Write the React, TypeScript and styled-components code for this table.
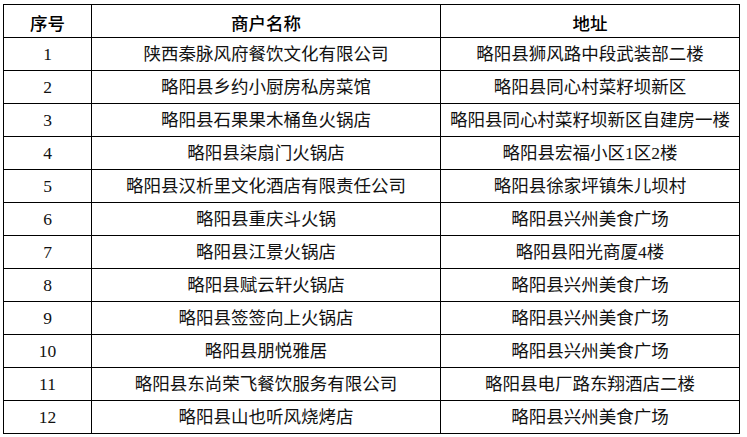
import styled, { createGlobalStyle } from "styled-components";

interface Merchant {
	id: number;
	name: string;
	address: string;
}

const merchants: Merchant[] = [
	{ id: 1, name: "陕西秦脉风府餐饮文化有限公司", address: "略阳县狮风路中段武装部二楼" },
	{ id: 2, name: "略阳县乡约小厨房私房菜馆", address: "略阳县同心村菜籽坝新区" },
	{ id: 3, name: "略阳县石果果木桶鱼火锅店", address: "略阳县同心村菜籽坝新区自建房一楼" },
	{ id: 4, name: "略阳县柒扇门火锅店", address: "略阳县宏福小区1区2楼" },
	{ id: 5, name: "略阳县汉析里文化酒店有限责任公司", address: "略阳县徐家坪镇朱儿坝村" },
	{ id: 6, name: "略阳县重庆斗火锅", address: "略阳县兴州美食广场" },
	{ id: 7, name: "略阳县江景火锅店", address: "略阳县阳光商厦4楼" },
	{ id: 8, name: "略阳县赋云轩火锅店", address: "略阳县兴州美食广场" },
	{ id: 9, name: "略阳县签签向上火锅店", address: "略阳县兴州美食广场" },
	{ id: 10, name: "略阳县朋悦雅居", address: "略阳县兴州美食广场" },
	{ id: 11, name: "略阳县东尚荣飞餐饮服务有限公司", address: "略阳县电厂路东翔酒店二楼" },
	{ id: 12, name: "略阳县山也听风烧烤店", address: "略阳县兴州美食广场" },
];

const GlobalStyle = createGlobalStyle`
	html, body {
		margin: 0;
		padding: 0;
		background-color: #ffffff;
	}
`;

const Page = styled.div`
	width: 747px;
	height: 437px;
	padding: 4px 0 0 3px;
	box-sizing: border-box;
	background-color: #ffffff;
`;

const Table = styled.table`
	border-collapse: collapse;
	table-layout: fixed;
	width: 737px;
	color: #000000;
`;

const Row = styled.tr`
	height: 33px;
`;

const HeadCell = styled.th`
	border: 1px solid #000000;
	padding: 3px 0 0 0;
	text-align: center;
	vertical-align: middle;
	font-family: "Noto Sans CJK SC", sans-serif;
	font-size: 17.5px;
	font-weight: 500;
	line-height: 1;
`;

const Cell = styled.td`
	border: 1px solid #000000;
	padding: 1px 0 0 0;
	text-align: center;
	vertical-align: middle;
	white-space: nowrap;
	font-family: "Liberation Serif", "Noto Sans CJK SC", serif;
	font-size: 17.5px;
	font-weight: 400;
	line-height: 1;
	color: #111111;
`;

export default function App() {
	return (
		<Page>
			<GlobalStyle />
			<Table>
				<colgroup>
					<col style={{ width: 88 }} />
					<col style={{ width: 349 }} />
					<col style={{ width: 299 }} />
				</colgroup>
				<thead>
					<Row>
						<HeadCell>序号</HeadCell>
						<HeadCell>商户名称</HeadCell>
						<HeadCell>地址</HeadCell>
					</Row>
				</thead>
				<tbody>
					{merchants.map((m) => (
						<Row key={m.id}>
							<Cell>{m.id}</Cell>
							<Cell>{m.name}</Cell>
							<Cell>{m.address}</Cell>
						</Row>
					))}
				</tbody>
			</Table>
		</Page>
	);
}
